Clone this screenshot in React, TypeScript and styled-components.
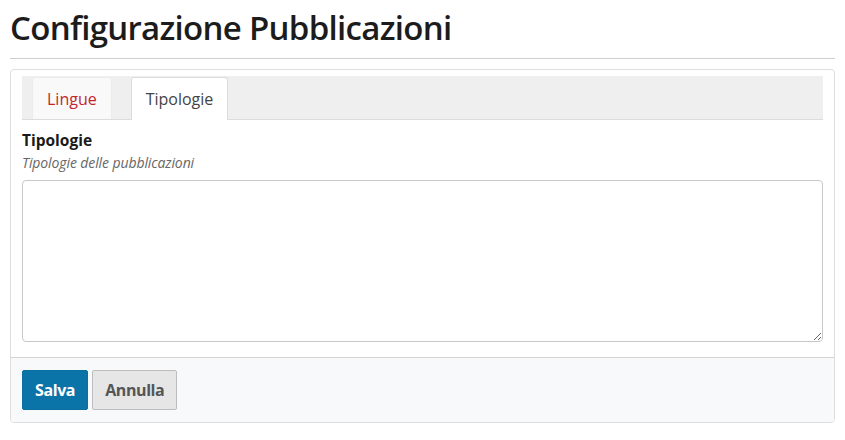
import React from "react";
import styled, { createGlobalStyle } from "styled-components";

const Global = createGlobalStyle`
  body {
    margin: 0;
    background: #fff;
    font-family: "Open Sans", "Liberation Sans", sans-serif;
    color: #1a1a1a;
  }
`;

const Page = styled.div`
  padding: 0 10px;
`;

const Title = styled.h1`
  margin: 0;
  padding-top: 6px;
  height: 52px;
  font-size: 33px;
  font-weight: 600;
  letter-spacing: -0.7px;
  color: #1c1c1c;
  line-height: 44px;
  border-bottom: 1px solid #cfcfcf;
`;

const Panel = styled.div`
  margin-top: 10px;
  border: 1px solid #dedede;
  border-radius: 4px;
  overflow: hidden;
`;

const Body = styled.div`
  padding: 6px 11px 15px;
`;

const TabBar = styled.div`
  display: flex;
  gap: 19px;
  padding: 1px 10px 0;
  height: 42px;
  background: #f0efef;
  border-bottom: 1px solid #dcdcdc;
`;

const Tab = styled.div<{ $active?: boolean }>`
  display: flex;
  align-items: center;
  padding: 0 14px;
  font-size: 16px;
  border: 1px solid ${(p) => (p.$active ? "#dcdcdc" : "#ececec")};
  border-bottom: none;
  border-radius: 3px 3px 0 0;
  background: ${(p) => (p.$active ? "#fff" : "#f9f9f9")};
  color: ${(p) => (p.$active ? "#444" : "#c1272d")};
  margin-bottom: ${(p) => (p.$active ? "-1px" : "0")};
`;

const Label = styled.div`
  margin-top: 10px;
  font-size: 15.5px;
  line-height: 20px;
  font-weight: 700;
  color: #1a1a1a;
`;

const Help = styled.div`
  margin-top: 4px;
  font-size: 14px;
  line-height: 18px;
  font-style: italic;
  letter-spacing: -0.1px;
  color: #666;
`;

const Area = styled.textarea`
  display: block;
  box-sizing: border-box;
  width: 100%;
  height: 162px;
  margin-top: 8px;
  border: 1px solid #c8c8c8;
  border-radius: 4px;
  resize: vertical;
  font: inherit;
`;

const Footer = styled.div`
  display: flex;
  gap: 4px;
  padding: 12px 11px 12px;
  background: #f8f9fa;
  border-top: 1px solid #d4d4d4;
`;

const Button = styled.button<{ $primary?: boolean }>`
  height: 40px;
  padding: 0 12px;
  font-family: inherit;
  font-size: 16px;
  font-weight: 700;
  letter-spacing: -0.4px;
  border-radius: 2px;
  border: 1px solid ${(p) => (p.$primary ? "#0b6fa0" : "#bdbdbd")};
  background: ${(p) => (p.$primary ? "#0a73a8" : "#e6e6e6")};
  color: ${(p) => (p.$primary ? "#fff" : "#555")};
`;

export default function App() {
  return (
    <Page>
      <Global />
      <Title>Configurazione Pubblicazioni</Title>
      <Panel>
        <Body>
          <TabBar>
            <Tab>Lingue</Tab>
            <Tab $active>Tipologie</Tab>
          </TabBar>
          <Label>Tipologie</Label>
          <Help>Tipologie delle pubblicazioni</Help>
          <Area />
        </Body>
        <Footer>
          <Button $primary>Salva</Button>
          <Button>Annulla</Button>
        </Footer>
      </Panel>
    </Page>
  );
}
